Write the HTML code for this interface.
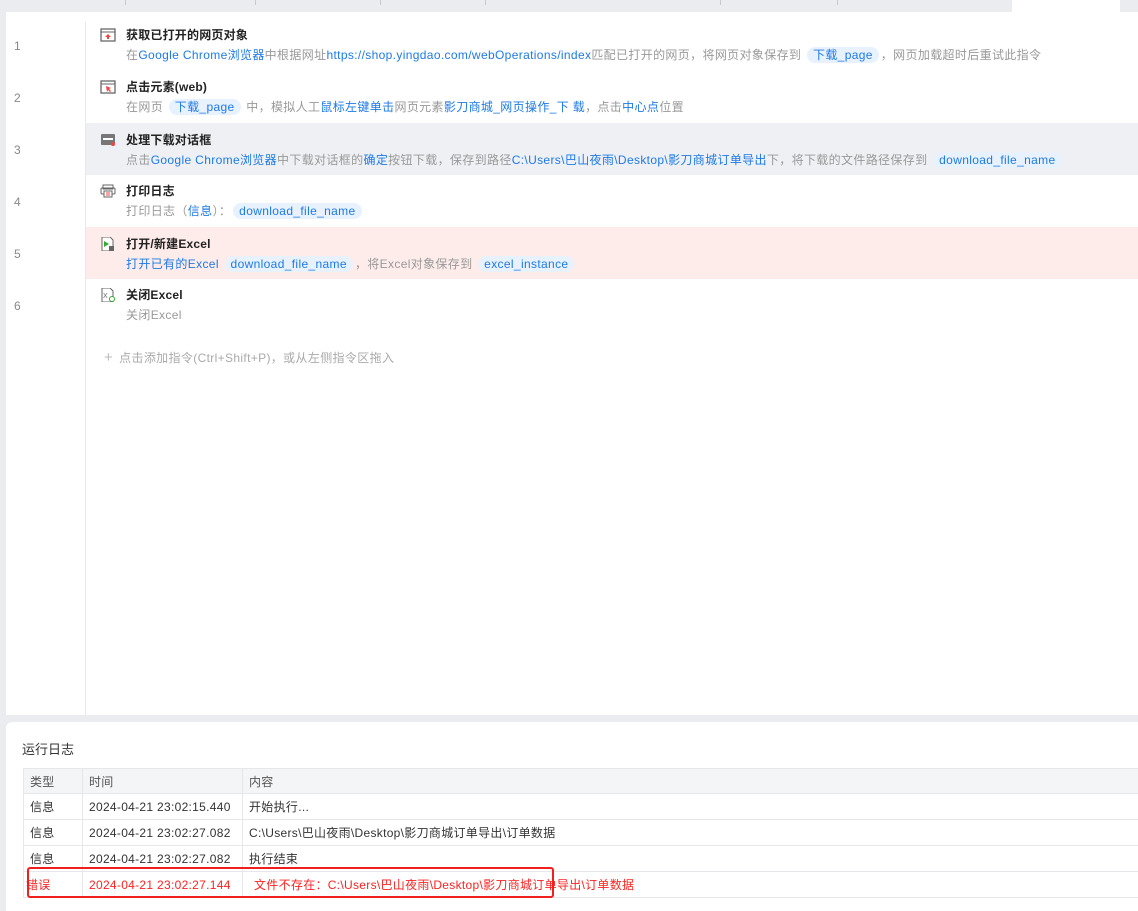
<!DOCTYPE html>
<html><head><meta charset="utf-8"><style>
*{margin:0;padding:0;box-sizing:border-box}
body{width:1138px;height:911px;background:#ebecf0;font-family:"Liberation Sans","Noto Sans CJK SC",sans-serif;position:relative;overflow:hidden;font-size:12px}
.tabs{position:absolute;top:0;left:0;width:1138px;height:12px}
.tabs i{position:absolute;top:0;width:1px;height:5px;background:#c8c9ce}
.tab{position:absolute;left:1012px;top:0;width:108px;height:12px;background:#fff}
.main{position:absolute;left:6px;top:12px;width:1132px;height:703px;background:#fff}
.gut{position:absolute;left:79px;top:10px;width:1px;height:693px;background:#e8e9ec}
.row{position:absolute;left:80px;width:1052px;height:52px}
.num{position:absolute;left:8px;color:#888;font-size:12px}
.ic{position:absolute;left:14px;top:6px;width:16px;height:14px}
.t{position:absolute;left:40px;top:4px;font-size:12px;font-weight:bold;color:#222;letter-spacing:0.2px}
.d{position:absolute;left:40px;top:24px;font-size:12px;color:#999;white-space:nowrap;letter-spacing:0.35px}
.b{color:#1e7ae6}
.p{background:#e8f2ff;color:#1e7ae6;border-radius:9px;padding:1px 6px;margin:0 2px}
.log{position:absolute;left:6px;top:722px;width:1132px;height:189px;background:#fff;border-radius:6px 0 0 0}
.lt{position:absolute;left:16px;top:17px;font-size:13px;color:#333}
table{position:absolute;left:17px;top:46px;width:1120px;border-collapse:collapse;font-size:12px;color:#333;letter-spacing:0.3px}
td{height:26px;border:1px solid #e6e7ea;padding-left:6px}
tr.h td{background:#f4f5f7;color:#555;height:25px}
tr.e td{color:#f22}
.box{position:absolute;left:27px;top:867px;width:527px;height:31px;border:2px solid #f0201e;border-radius:3px}
</style></head><body>
<div class="tabs"><i style="left:125px"></i><i style="left:255px"></i><i style="left:380px"></i><i style="left:485px"></i><i style="left:720px"></i><i style="left:837px"></i><div class="tab"></div></div>
<div class="main">
<div class="gut"></div>
<div class="num" style="top:27px">1</div>
<div class="num" style="top:79px">2</div>
<div class="num" style="top:131px">3</div>
<div class="num" style="top:183px">4</div>
<div class="num" style="top:235px">5</div>
<div class="num" style="top:287px">6</div>

<div class="row" style="top:10px"><svg class="ic" viewBox="0 0 16 14"><rect x="1" y="1" width="14" height="12" fill="none" stroke="#666" stroke-width="1.3"/><line x1="1" y1="4" x2="15" y2="4" stroke="#666"/><path d="M8 6l3 3h-2v2h-2v-2h-2z" fill="#e44"/></svg><div class="t">获取已打开的网页对象</div><div class="d">在<span class="b">Google Chrome浏览器</span>中根据网址<span class="b">https://shop.yingdao.com/webOperations/index</span>匹配已打开的网页，将网页对象保存到 <span class="p">下载_page</span>，网页加载超时后重试此指令</div></div>
<div class="row" style="top:62px"><svg class="ic" viewBox="0 0 16 14"><rect x="1" y="1" width="14" height="12" fill="none" stroke="#666" stroke-width="1.3"/><line x1="1" y1="4" x2="15" y2="4" stroke="#666"/><path d="M6 6l5 2-2 1 2 2-1 1-2-2-1 2z" fill="#e44"/></svg><div class="t">点击元素(web)</div><div class="d">在网页 <span class="p">下载_page</span> 中，模拟人工<span class="b">鼠标左键单击</span>网页元素<span class="b">影刀商城_网页操作_下 载</span>，点击<span class="b">中心点</span>位置</div></div>
<div class="row" style="top:111px;height:52px;background:#eef0f4"><svg class="ic" viewBox="0 0 16 14" style="top:10px"><rect x="1" y="1" width="14" height="11" rx="1" fill="#777"/><rect x="3" y="5" width="10" height="2" fill="#fff"/><circle cx="13" cy="11" r="2" fill="#e44"/></svg><div class="t" style="top:8px">处理下载对话框</div><div class="d" style="top:28px">点击<span class="b">Google Chrome浏览器</span>中下载对话框的<span class="b">确定</span>按钮下载，保存到路径<span class="b">C:\Users\巴山夜雨\Desktop\影刀商城订单导出</span>下，将下载的文件路径保存到 <span class="p">download_file_name</span></div></div>
<div class="row" style="top:166px"><svg class="ic" viewBox="0 0 16 14"><rect x="3" y="1" width="10" height="4" fill="none" stroke="#666"/><rect x="1" y="4" width="14" height="6" rx="1" fill="none" stroke="#666"/><rect x="4" y="7" width="8" height="6" fill="#fff" stroke="#666"/><line x1="6" y1="9" x2="10" y2="9" stroke="#e44"/><line x1="6" y1="11" x2="10" y2="11" stroke="#e44"/></svg><div class="t">打印日志</div><div class="d">打印日志（<span class="b">信息</span>）：<span class="p">download_file_name</span></div></div>
<div class="row" style="top:215px;background:#fdecea"><svg class="ic" viewBox="0 0 16 14" style="top:10px"><path d="M2 0h8l3 3v11H2z" fill="#fff" stroke="#666"/><path d="M4 4l5 3-5 3z" fill="#3a3"/><rect x="9" y="9" width="5" height="5" fill="#666"/></svg><div class="t" style="top:8px">打开/新建Excel</div><div class="d" style="top:28px"><span class="b">打开已有的Excel</span> <span class="p">download_file_name</span>，将Excel对象保存到 <span class="p">excel_instance</span></div></div>
<div class="row" style="top:270px"><svg class="ic" viewBox="0 0 16 14"><path d="M2 0h8l3 3v11H2z" fill="#fff" stroke="#666"/><text x="3" y="10" font-size="7" fill="#666">X</text><circle cx="12" cy="11" r="2.5" fill="#fff" stroke="#3a3"/></svg><div class="t">关闭Excel</div><div class="d">关闭Excel</div></div>
<div style="position:absolute;left:98px;top:337px;color:#aaa;font-size:12px;letter-spacing:0.35px"><span style="font-size:15px;color:#bbb;margin-right:6px">+</span>点击添加指令(Ctrl+Shift+P)，或从左侧指令区拖入</div>
</div>
<div class="log"><div class="lt">运行日志</div>
<table>
<tr class="h"><td style="width:59px">类型</td><td style="width:160px">时间</td><td>内容</td></tr>
<tr><td>信息</td><td>2024-04-21 23:02:15.440</td><td>开始执行...</td></tr>
<tr><td>信息</td><td>2024-04-21 23:02:27.082</td><td>C:\Users\巴山夜雨\Desktop\影刀商城订单导出\订单数据</td></tr>
<tr><td>信息</td><td>2024-04-21 23:02:27.082</td><td>执行结束</td></tr>
<tr class="e"><td style="padding-left:2px">错误</td><td>2024-04-21 23:02:27.144</td><td style="padding-left:11px">文件不存在：C:\Users\巴山夜雨\Desktop\影刀商城订单导出\订单数据</td></tr>
</table></div>
<div class="box"></div>
</body></html>
